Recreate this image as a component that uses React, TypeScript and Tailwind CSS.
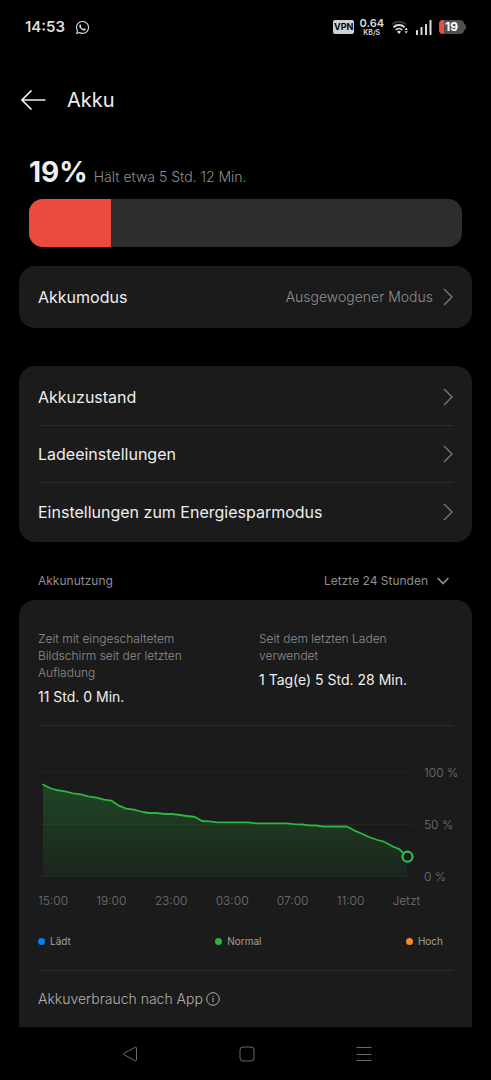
import React from 'react';
import { FaWhatsapp } from 'react-icons/fa';

interface SettingRowProps {
  label: string;
  value?: string;
}

const batteryLevel = 19;

const settings = ['Akkuzustand', 'Ladeeinstellungen', 'Einstellungen zum Energiesparmodus'];

const timeLabels = ['15:00', '19:00', '23:00', '03:00', '07:00', '11:00', 'Jetzt'];

const legend = [
  { label: 'Lädt', color: 'bg-[#0a7cf5]' },
  { label: 'Normal', color: 'bg-[#2bb541]' },
  { label: 'Hoch', color: 'bg-[#f58a2c]' },
];

// x / y positions of the battery level inside the 376x120 chart
const levels = [
  [5, 19.5], [12, 23], [18, 25], [27, 26.3], [35, 28.3], [43, 29.3], [50, 31.3], [58.5, 32.7],
  [66, 34.7], [73.5, 35.7], [81, 40.7], [88, 43.7], [96, 44.7], [104.5, 47], [111, 48], [119, 48],
  [127, 49], [134.5, 49], [142, 50], [149, 51], [157, 52], [164, 56], [172, 56.3], [179, 57.3],
  [210, 57.3], [218, 58.3], [248, 58.3], [256, 59.2], [264.5, 59.5], [271, 60.3], [278, 60.5],
  [285, 61.5], [309, 61.5], [316, 65.3], [324.5, 69], [331, 72], [339.5, 75], [346, 76.7],
  [354.5, 81.3], [361, 84], [365, 87.5],
];

const ChevronRight = () => (
  <svg className="h-[18px] w-[10px] shrink-0" viewBox="0 0 10 18" fill="none" stroke="#777" strokeWidth="1.4">
    <path d="M1 1l8 8-8 8" />
  </svg>
);

const SettingRow: React.FC<SettingRowProps> = ({ label, value }) => (
  <button type="button" className="flex h-full w-full items-center justify-between text-left">
    <span className="text-[16px] leading-6 text-[#efefef]">{label}</span>
    <span className="flex items-center gap-[10px]">
      {value && <span className="text-[14px] leading-6 font-light text-[#8f8f8f]">{value}</span>}
      <ChevronRight />
    </span>
  </button>
);

const StatusBar = () => (
  <div className="flex h-[54px] items-center justify-between px-[25px] text-[#dcdcdc]">
    <div className="flex items-center gap-[10px]">
      <span className="text-[15px] leading-5 font-semibold">14:53</span>
      <FaWhatsapp className="h-[15px] w-[15px]" />
    </div>
    <div className="flex items-center">
      <span className="rounded-[2px] bg-[#d0d0d0] px-[1px] text-[9px] leading-[14px] font-bold text-black">VPN</span>
      <span className="ml-[5px] flex flex-col items-center font-semibold">
        <span className="text-[11px] leading-[12px]">0.64</span>
        <span className="text-[7px] leading-[8px]">KB/S</span>
      </span>
      <svg className="ml-[7px] h-[14px] w-[18px]" viewBox="0 0 18 14" fill="none">
        <path d="M.8 4.5a10.5 10.5 0 0 1 14.4 0" stroke="#3c3c3c" strokeWidth="1.6" />
        <path d="M2.5 7.2a8 8 0 0 1 11 0" stroke="#dcdcdc" strokeWidth="2" />
        <path d="M4.8 9.8a4.7 4.7 0 0 1 6.4 0" stroke="#dcdcdc" strokeWidth="1.8" />
        <path d="M8 14l-2-2.3a3 3 0 0 1 4 0z" fill="#dcdcdc" />
        <path d="M13.5 10l1.7-2.2L16.900 10zM13.5 11.3h3.4l-1.7 2.2z" fill="#dcdcdc" />
      </svg>
      <svg className="ml-[7px] h-[15px] w-[16px]" viewBox="0 0 16 15" fill="#dcdcdc">
        <rect x="0" y="10" width="2" height="5" rx=".5" />
        <rect x="4.5" y="7" width="2" height="8" rx=".5" />
        <rect x="9" y="4" width="2" height="11" rx=".5" />
        <rect x="13.5" y="0" width="2" height="15" rx=".5" />
      </svg>
      <span className="ml-[7px] flex items-center">
        <span className="flex h-[14px] w-[25px] items-center justify-center rounded-[4px] bg-linear-to-r from-[#eb4a3e] from-[22%] to-[#4f4f4f] to-[22%] text-[12px] leading-[14px] font-bold text-white">
          {batteryLevel}
        </span>
        <span className="h-[6px] w-[2px] rounded-r-full bg-[#4f4f4f]" />
      </span>
    </div>
  </div>
);

const UsageChart = () => {
  const line = levels.map(([x, y]) => `${x},${y}`).join(' ');

  return (
    <div className="pr-[14px] pl-[19px]">
      <div className="flex gap-[10px]">
        <svg className="min-w-0 flex-1" viewBox="0 0 376 120" fill="none" role="img" aria-label="Akkunutzung">
          <defs>
            <linearGradient id="level" x1="0" y1="19" x2="0" y2="112" gradientUnits="userSpaceOnUse">
              <stop offset="0" stopColor="#2bb541" stopOpacity=".28" />
              <stop offset="1" stopColor="#2bb541" stopOpacity=".06" />
            </linearGradient>
          </defs>
          <path d="M0 7.5h376M0 59.5h376M0 111.5h376" stroke="#232323" />
          <polygon points={`5,112 ${line} 369,92 369,112`} fill="url(#level)" />
          <polyline points={line} stroke="#2bb541" strokeWidth="1.8" strokeLinejoin="round" strokeLinecap="round" />
          <circle cx="369.5" cy="91.7" r="5" fill="#1b1b1b" stroke="#2fc04a" strokeWidth="2.2" />
        </svg>
        <div className="flex w-[34px] flex-col justify-between text-[12px] leading-4 font-light whitespace-nowrap text-[#747474]">
          <span>100 %</span>
          <span>50 %</span>
          <span>0 %</span>
        </div>
      </div>
      <div className="mt-2 flex justify-between pr-[38px] text-[12px] leading-4 font-light text-[#747474]">
        {timeLabels.map((label) => (
          <span key={label}>{label}</span>
        ))}
      </div>
    </div>
  );
};

const App: React.FC = () => {
  return (
    <div className="flex min-h-screen flex-col bg-black font-['Inter',sans-serif]">
      <StatusBar />

      <header className="flex h-[92px] items-center gap-[21px] pl-[21px]">
        <button type="button" aria-label="Zurück">
          <svg className="h-5 w-[25px]" viewBox="0 0 25 20" fill="none" stroke="#efefef" strokeWidth="1.6">
            <path d="M24.5 10H1M10.5.5L1 10l9.5 9.5" />
          </svg>
        </button>
        <h1 className="text-[20px] leading-7 text-[#efefef]">Akku</h1>
      </header>

      <main className="flex flex-1 flex-col px-[19px]">
        {/* Battery level */}
        <section className="px-[10px] pt-2">
          <p className="flex items-baseline gap-1.5">
            <span className="text-[28px] leading-9 font-bold text-[#efefef]">{batteryLevel}%</span>
            <span className="text-[14px] font-light text-[#8f8f8f]">Hält etwa 5 Std. 12 Min.</span>
          </p>
          <div className="mt-[9px] h-12 overflow-hidden rounded-[14px] bg-[#2d2d2d]">
            <div className="h-full bg-[#eb4a3e]" style={{ width: `${batteryLevel}%` }}></div>
          </div>
        </section>

        <section className="mt-[19px] h-[62px] rounded-[16px] bg-[#1b1b1b] px-[19px]">
          <SettingRow label="Akkumodus" value="Ausgewogener Modus" />
        </section>

        <ul className="mt-[38px] rounded-[16px] bg-[#1b1b1b] px-[19px] pt-[3px] pb-[2px]">
          {settings.map((label) => (
            <li key={label} className="h-[57px] border-b border-[#2b2b2b] last:border-b-0">
              <SettingRow label={label} />
            </li>
          ))}
        </ul>

        <div className="mt-[29px] flex h-5 items-center justify-between pr-[23px] pl-[19px] text-[12px] text-[#8f8f8f]">
          <h2>Akkunutzung</h2>
          <label className="flex items-center gap-[9px]">
            <select aria-label="Zeitraum" className="field-sizing-content appearance-none bg-transparent">
              <option>Letzte 24 Stunden</option>
            </select>
            <svg className="h-2 w-3" viewBox="0 0 12 8" fill="none" stroke="#8f8f8f" strokeWidth="1.8">
              <path d="M.7 1L6 6.5 11.3 1" />
            </svg>
          </label>
        </div>

        {/* Usage card */}
        <section className="mt-[9px] flex-1 rounded-t-[16px] bg-[#1b1b1b] pt-[30px]">
          <dl className="mx-[19px] grid grid-cols-[221fr_194fr] border-b border-[#2b2b2b] pb-[18px]">
            <div className="pr-[60px]">
              <dt className="text-[12px] leading-[17px] font-light text-[#8f8f8f]">
                Zeit mit eingeschaltetem Bildschirm seit der letzten Aufladung
              </dt>
              <dd className="mt-[6px] text-[14px] leading-5 text-[#efefef]">11 Std. 0 Min.</dd>
            </div>
            <div>
              <dt className="pr-[50px] text-[12px] leading-[17px] font-light text-[#8f8f8f]">
                Seit dem letzten Laden verwendet
              </dt>
              <dd className="mt-[6px] text-[14px] leading-5 text-[#efefef]">1 Tag(e) 5 Std. 28 Min.</dd>
            </div>
          </dl>

          <div className="mt-[39px]">
            <UsageChart />
          </div>

          <ul className="mx-[19px] mt-6 flex justify-between border-b border-[#2b2b2b] pr-[10px] pb-[21px]">
            {legend.map((item) => (
              <li key={item.label} className="flex items-center gap-[5px] text-[10px] leading-4 text-[#a0a0a0]">
                <span className={`h-[7px] w-[7px] rounded-full ${item.color}`}></span>
                {item.label}
              </li>
            ))}
          </ul>

          <div className="flex h-14 items-center gap-[3px] px-[19px] text-[#b0b0b0]">
            <h3 className="text-[14px] leading-5 font-light">Akkuverbrauch nach App</h3>
            <button type="button" aria-label="Info">
              <svg className="h-[14px] w-[14px]" viewBox="0 0 14 14" fill="none" stroke="currentColor">
                <circle cx="7" cy="7" r="6.3" />
                <path d="M7 6v4.2M7 3.800v1.2" />
              </svg>
            </button>
          </div>
        </section>
      </main>

      {/* System navigation */}
      <nav className="flex h-[53px] items-center justify-center gap-[101px] pl-[2px]">
        <button type="button" aria-label="Zurück">
          <svg className="h-4 w-4" viewBox="0 0 16 16" fill="none" stroke="#6a6a6a">
            <path d="M14.5 2v12c0 .8-.6 1.1-1.3.7L1.8 8.7c-.7-.4-.7-1 0-1.4l11.400-6c.7-.4 1.3-.1 1.3.7z" />
          </svg>
        </button>
        <button type="button" aria-label="Startseite">
          <svg className="h-4 w-4" viewBox="0 0 16 16" fill="none" stroke="#6a6a6a">
            <rect x="1" y="1" width="14" height="14" rx="3" />
          </svg>
        </button>
        <button type="button" aria-label="Letzte Apps">
          <svg className="h-4 w-4" viewBox="0 0 16 16" fill="none" stroke="#6a6a6a">
            <path d="M.5 1.5h15M.5 8.500h15M.5 14.5h15" />
          </svg>
        </button>
      </nav>
    </div>
  );
};

export default App;
